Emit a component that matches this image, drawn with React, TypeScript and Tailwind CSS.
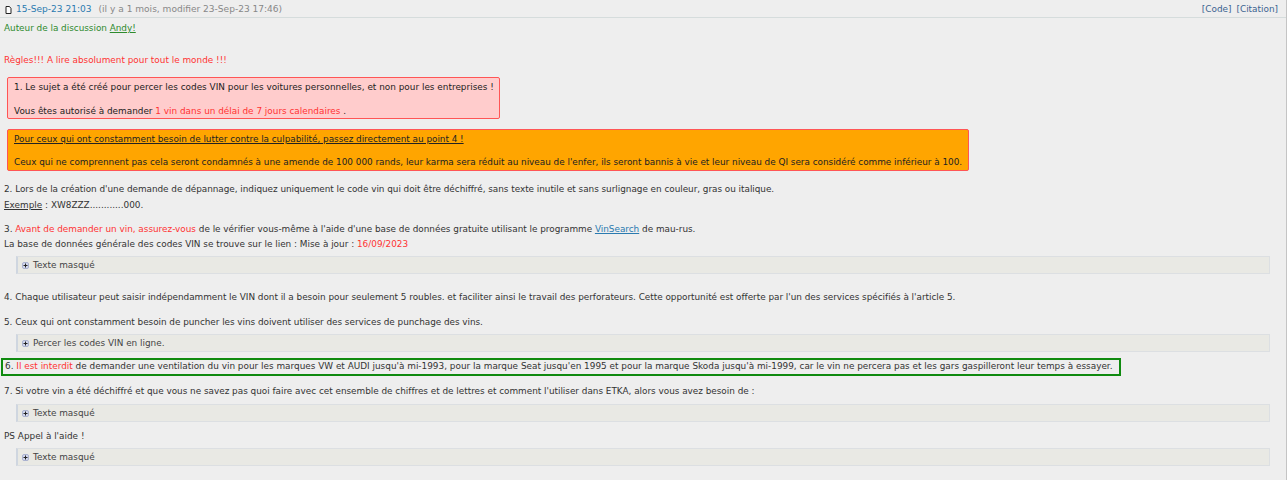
import React from 'react';

const Red: React.FC<{ children: React.ReactNode }> = ({ children }) => (
  <span className="text-[#ff3333]">{children}</span>
);

const Spoiler: React.FC<{ label: string; className: string }> = ({ label, className }) => (
  <div className={`ml-[16px] mr-[16px] flex h-[18px] items-center border border-[#dcdfe2] border-l-2 border-l-[#cfd6e0] bg-[#e9e9e4] pl-[4px] pt-[1px] text-[#444] ${className}`}>
    <svg width="7" height="7" viewBox="0 0 7 7" className="mr-[4px] shrink-0">
      <rect x="0.5" y="0.5" width="6" height="6" rx="1.5" fill="#d3d8ee" stroke="#aab2d0" />
      <path d="M1.5 3.5h4M3.5 1.5v4" stroke="#222" strokeWidth="1" />
    </svg>
    {label}
  </div>
);

const Line: React.FC<{ className?: string; children: React.ReactNode }> = ({ className = '', children }) => (
  <div className={`h-[15px] whitespace-nowrap pl-[4px] leading-[15px] ${className}`}>{children}</div>
);

export default function App() {
  return (
    <div className="h-[480px] w-[1287px] overflow-hidden border-r border-[#c4c4c4] bg-[#eeeeee] font-['DejaVu_Sans',sans-serif] text-[8.9px] text-[#333]">
      <div className="flex h-[18px] items-center justify-between border-b border-[#d5dcdc] pl-[5px] pr-[8px]">
        <div className="flex items-center pt-[2px] text-[9.05px]">
          <svg width="7" height="8" viewBox="0 0 7 8" className="mr-[4px]">
            <path d="M1 .5h3.5l1.5 2v5h-5z" fill="#fff" stroke="#222" strokeWidth="1" />
          </svg>
          <span className="text-[#2a7ab0]">15-Sep-23 21:03</span>
          <span className="ml-[7px] text-[#888]">(il y a 1 mois, modifier 23-Sep-23 17:46)</span>
        </div>
        <div className="flex gap-[5px] pt-[2px] text-[#3a6390]">
          <span>[Code]</span>
          <span>[Citation]</span>
        </div>
      </div>

      <Line className="mt-[3px] tracking-[-0.02px] text-[#2e8b2e]">
        Auteur de la discussion <span className="underline">Andy!</span>
      </Line>
      <Line className="mt-[17px] text-[#ff3333]">Règles!!! A lire absolument pour tout le monde !!!</Line>

      <div className="ml-[7px] mt-[9px] h-[42px] w-[493px] whitespace-nowrap rounded-[2px] border border-[#ff5555] bg-[#ffcccc] pl-[6px] pt-[2px] text-[#222]">
        <div className="h-[15px] leading-[15px] tracking-[0.01px]">1. Le sujet a été créé pour percer les codes VIN pour les voitures personnelles, et non pour les entreprises !</div>
        <div className="mt-[9px] leading-[15px]">
          Vous êtes autorisé à demander <Red>1 vin dans un délai de 7 jours calendaires</Red> .
        </div>
      </div>

      <div className="ml-[7px] mt-[10px] h-[42px] w-[962px] whitespace-nowrap rounded-[2px] border border-[#ff5555] bg-[#ffa500] pl-[6px] pt-[2px] text-[#222]">
        <div className="h-[15px] leading-[15px] tracking-[-0.03px] underline">Pour ceux qui ont constamment besoin de lutter contre la culpabilité, passez directement au point 4 !</div>
        <div className="mt-[8px] leading-[15px] tracking-[-0.02px]">
          Ceux qui ne comprennent pas cela seront condamnés à une amende de 100 000 rands, leur karma sera réduit au niveau de l'enfer, ils seront bannis à vie et leur niveau de QI sera considéré comme inférieur à 100.
        </div>
      </div>

      <Line className="mt-[11px] tracking-[-0.035px]">2. Lors de la création d'une demande de dépannage, indiquez uniquement le code vin qui doit être déchiffré, sans texte inutile et sans surlignage en couleur, gras ou italique.</Line>
      <Line className="mt-[1px]">
        <span className="underline">Exemple</span> : XW8ZZZ............000.
      </Line>
      <Line className="mt-[9px] tracking-[-0.015px]">
        3. <Red>Avant de demander un vin, assurez-vous</Red> de le vérifier vous-même à l'aide d'une base de données gratuite utilisant le programme{' '}
        <span className="text-[#2a7ab0] underline">VinSearch</span> de mau-rus.
      </Line>
      <Line>
        La base de données générale des codes VIN se trouve sur le lien : Mise à jour : <Red>16/09/2023</Red>
      </Line>
      <Spoiler label="Texte masqué" className="mt-[4px]" />

      <Line className="mt-[16px] tracking-[-0.027px]">4. Chaque utilisateur peut saisir indépendamment le VIN dont il a besoin pour seulement 5 roubles. et faciliter ainsi le travail des perforateurs. Cette opportunité est offerte par l'un des services spécifiés à l'article 5.</Line>
      <Line className="mt-[10px] tracking-[-0.04px]">5. Ceux qui ont constamment besoin de puncher les vins doivent utiliser des services de punchage des vins.</Line>
      <Spoiler label="Percer les codes VIN en ligne." className="mt-[4px]" />

      <div className="ml-[1px] mt-[6px] flex h-[18px] w-[1120px] items-center whitespace-nowrap border-2 border-[#0f8a0f] pl-[2px] tracking-[0.005px]">
        <span>
          6. <Red>Il est interdit</Red> de demander une ventilation du vin pour les marques VW et AUDI jusqu'à mi-1993, pour la marque Seat jusqu'en 1995 et pour la marque Skoda jusqu'à mi-1999, car le vin ne percera pas et les gars gaspilleront leur temps à essayer.
        </span>
      </div>

      <Line className="mt-[8px] tracking-[-0.017px]">7. Si votre vin a été déchiffré et que vous ne savez pas quoi faire avec cet ensemble de chiffres et de lettres et comment l'utiliser dans ETKA, alors vous avez besoin de :</Line>
      <Spoiler label="Texte masqué" className="mt-[5px]" />
      <Line className="mt-[7px]">PS Appel à l'aide !</Line>
      <Spoiler label="Texte masqué" className="mt-[4px]" />
    </div>
  );
}
